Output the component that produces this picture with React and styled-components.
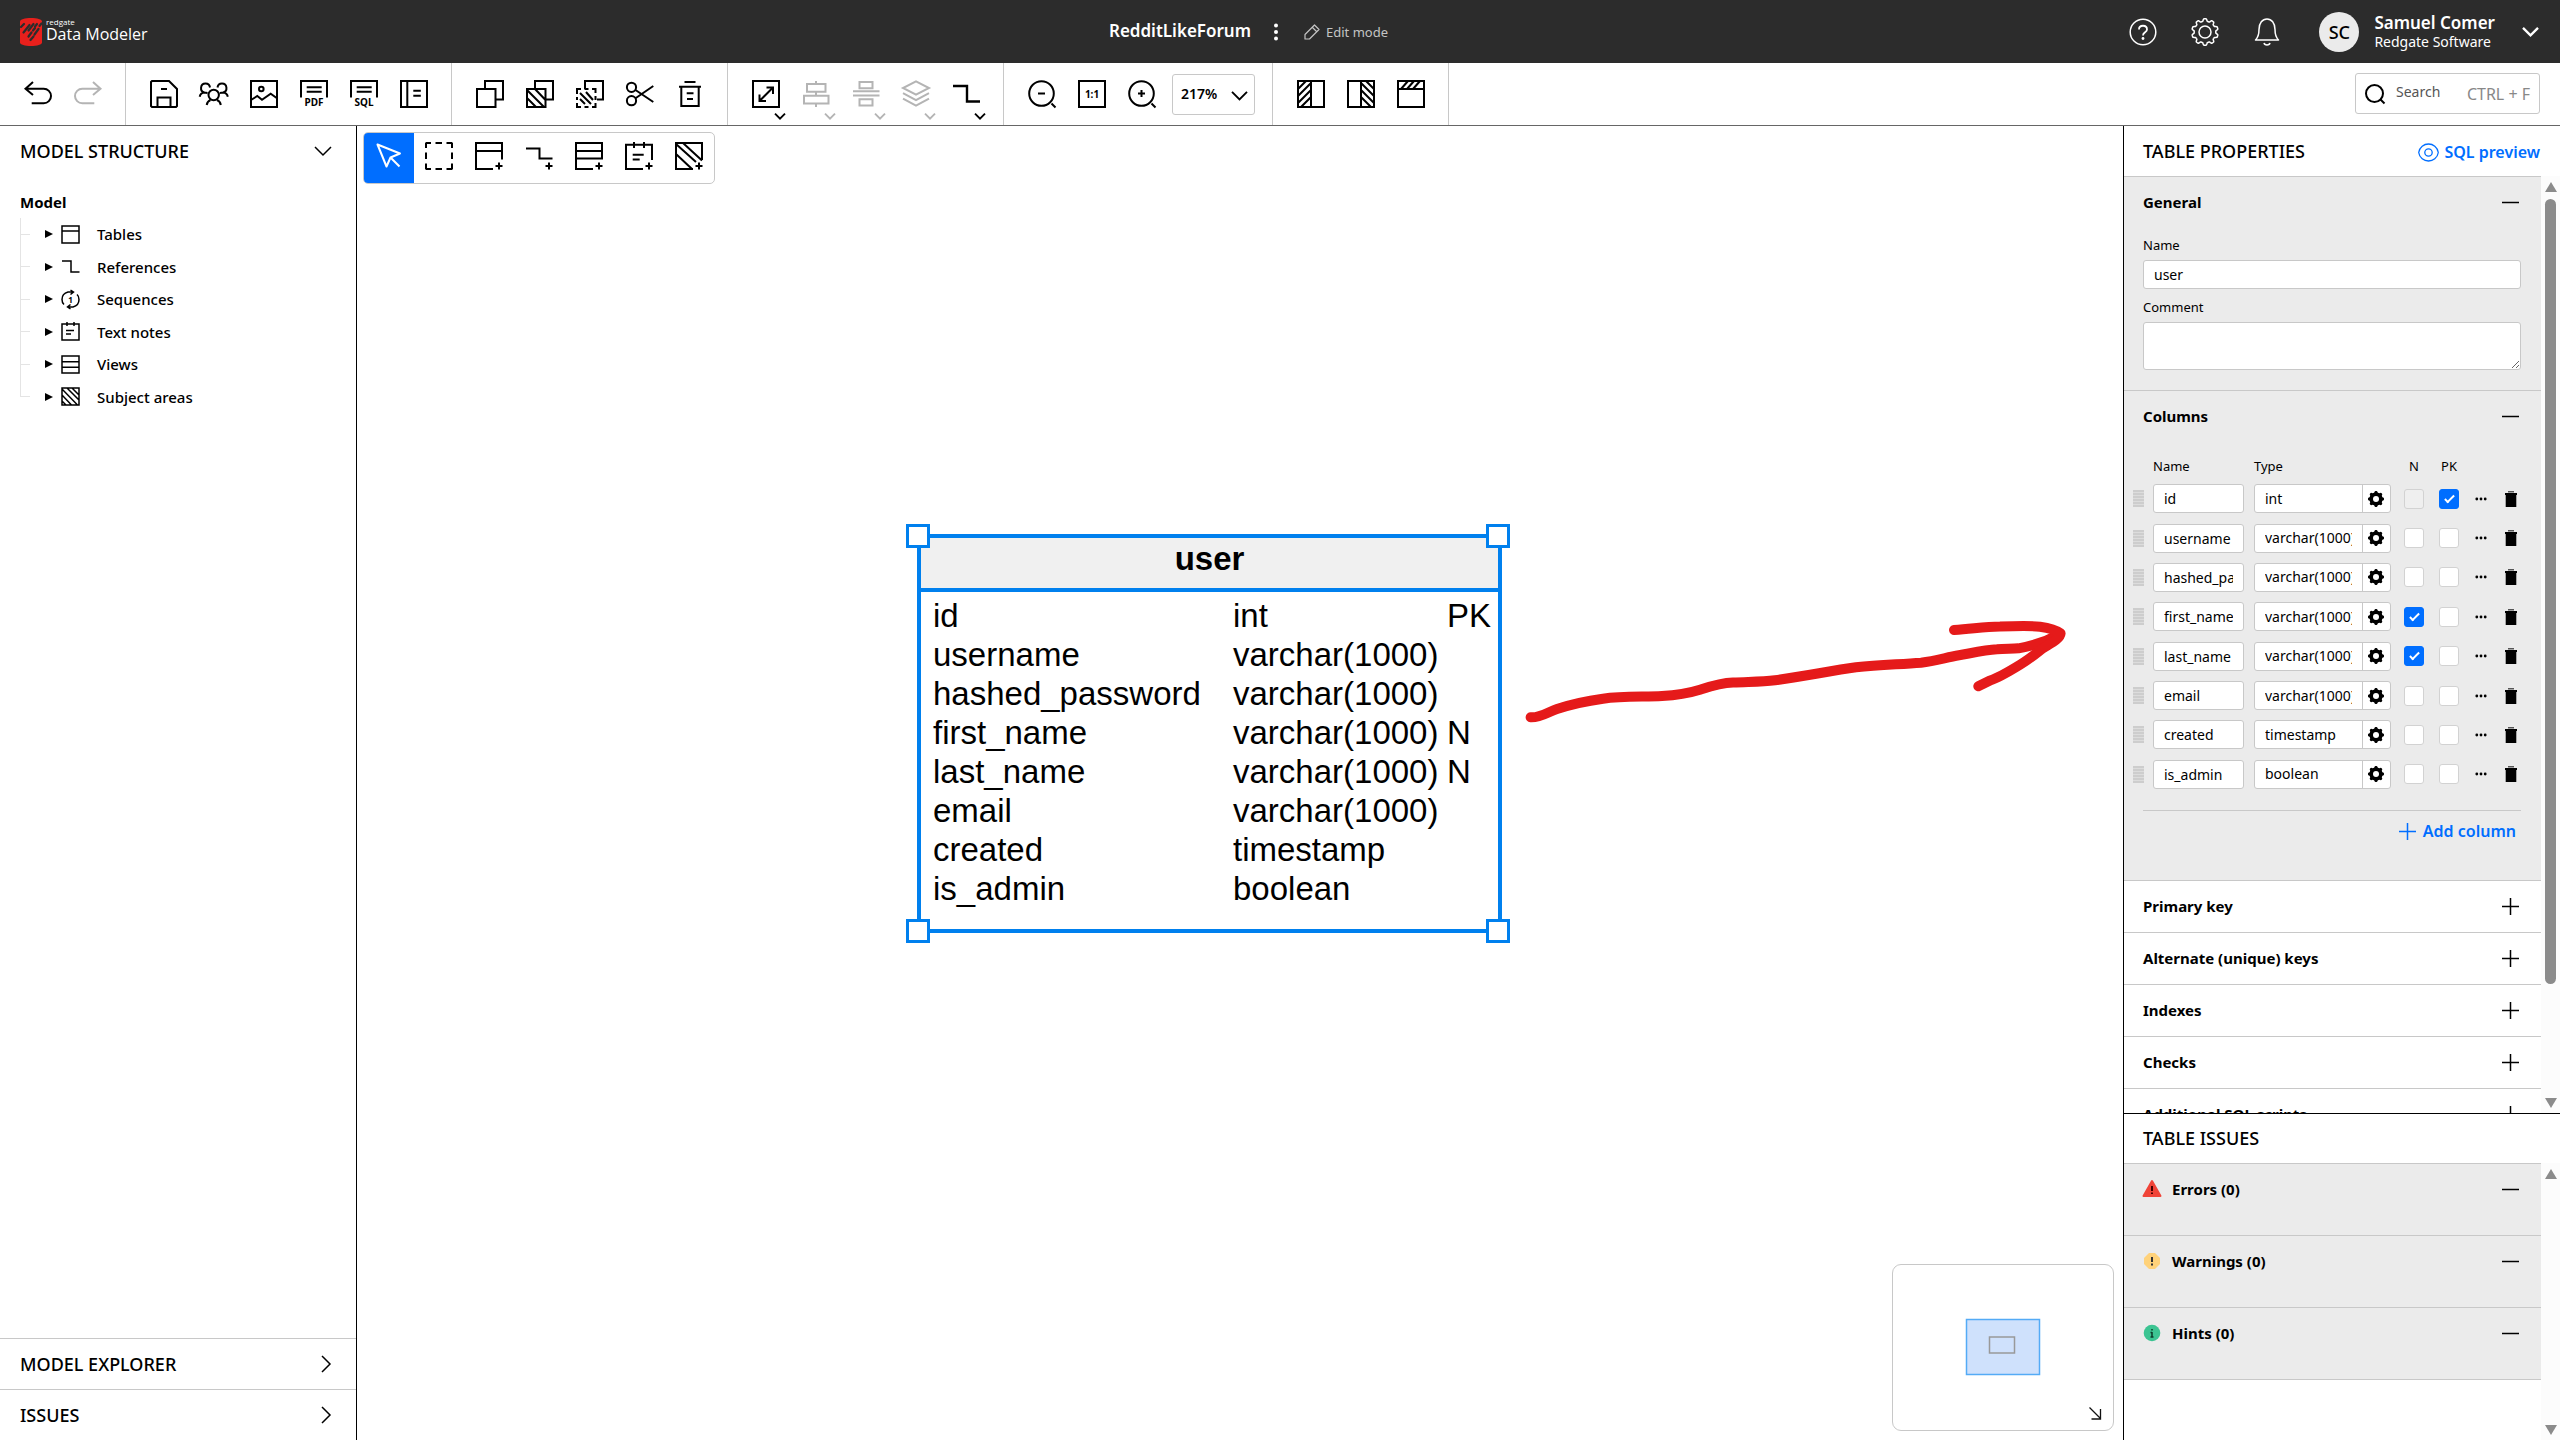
import React from "react";
import styled, { createGlobalStyle, css } from "styled-components";

const GlobalStyle = createGlobalStyle`
  *, *::before, *::after { box-sizing: border-box; }
  html, body, #root { height: 100%; margin: 0; }
  body { background: #fff; color: #000; font: 400 14px/20px "Noto Sans", "Open Sans", sans-serif; overflow: hidden; }
  button, input, select, textarea { font: inherit; color: inherit; margin: 0; }
  button { border: 0; padding: 0; background: none; cursor: pointer; }
  h1, h2, h3, p, ul { margin: 0; padding: 0; }
`;

const blue = "#006eff";
const line = "#c8c8c8";
const panelGray = "#ebebeb";

/* ---------- icons ---------- */

const Svg = styled.svg`
  display: block;
  flex: none;
  fill: none;
  stroke: currentColor;
  overflow: visible;
`;

const Glyph = styled.text`
  fill: currentColor;
  stroke: none;
  font: 700 ${(p) => p.$size}px "Noto Sans", sans-serif;
  text-anchor: middle;
`;

function Icon({ size = 28, box = 28, weight = 2, children }) {
  return (
    <Svg width={size} height={size} viewBox={`0 0 ${box} ${box}`} strokeWidth={weight} aria-hidden="true">
      {children}
    </Svg>
  );
}

function cogPath(c, outer, inner, teeth) {
  const pts = [];
  const steps = teeth * 12;
  for (let i = 0; i <= steps; i++) {
    const a = (i / steps) * Math.PI * 2;
    const w = Math.max(-1, Math.min(1, Math.cos(a * teeth) * 1.8));
    const r = (outer + inner) / 2 + ((outer - inner) / 2) * w;
    pts.push(`${(c + r * Math.sin(a)).toFixed(2)} ${(c - r * Math.cos(a)).toFixed(2)}`);
  }
  return `M${pts.join("L")}Z`;
}

const plusMark = "M24 20.5v7M20.5 24h7";

const icons = {
  undo: <path d="M9 2 1.5 8.7 9 15M1.5 8.7h18.2a7.3 7.3 0 0 1 0 14.6H7.7" />,
  redo: <path d="M19 2l7.5 6.7L19 15M26.500 8.700H8.300a7.300 7.300 0 0 0 0 14.600h12" />,
  save: <path d="M2 1h17l8 8v17l-1 1H2l-1-1V2zM11 9h6M7.500 27v-9.500h13V27" />,
  people: (
    <>
      <circle cx="13.700" cy="15" r="5.200" />
      <path d="M6.700 25c.4-2.500 1.800-4.200 3.800-5M20.800 25c-.4-2.500-1.800-4.200-3.800-5M4.500 12.500a4.500 4.500 0 1 1 5.500-5M-.3 16.800c.4-2.200 2-4 4.800-4.300l3 .5M23 12.500a4.500 4.500 0 1 0-5.500-5M27.800 16.800c-.4-2.200-2-4-4.800-4.300l-3 .5" />
    </>
  ),
  image: (
    <>
      <path d="M1 1h26v26H1zM1 20l6.300-4 4.700 3.700 8.700-6 6.300 4.600" />
      <circle cx="11.300" cy="9" r="2.300" />
    </>
  ),
  pdf: (
    <>
      <path d="M1 17.500V1h26v16.500M6.700 7.300h15M6.700 11.800h15" />
      <Glyph x="14" y="26" $size={10}>PDF</Glyph>
    </>
  ),
  sql: (
    <>
      <path d="M1 17.500V1h26v16.500M6.700 7.300h15M6.700 11.800h15" />
      <Glyph x="14" y="26" $size={10}>SQL</Glyph>
    </>
  ),
  docs: <path d="M1 1h26v26H1zM7.300 1v26M13.300 10.700h7.500M13.300 15.700h7.500" />,
  copy: <path d="M1 9h18.500v18H1zM9 9V1h18v18.500h-7.500" />,
  copyArea: <path d="M1 9h18.500v18H1zM9 9V1h18v18.500h-7.500M1 10l17 17M1 18l9 9M9 9l10.500 11" />,
  copyAreaDashed: (
    <>
      <path d="M9 9V1h18v18.500h-6" />
      <path d="M1 14V9h4M8.500 9h4M16 9h3.500v4M19.500 16v4M19.500 23v4H16M12.500 27h-4M5 27H1v-4M1 20v-3M4 13l11 11M4 19l5 5M10 12l7 8" />
    </>
  ),
  cut: (
    <>
      <circle cx="5.500" cy="7.300" r="4.600" />
      <circle cx="5.500" cy="20.700" r="4.600" />
      <path d="M9.500 10 27.300 22M9.500 18.200 27.300 6" />
    </>
  ),
  trash: <path d="M8.500 2h11M3 6.800h22M5.300 7v19h17.400V7M10.700 13.300h6.800M11 19h6" />,
  fit: <path d="M1 1h26v26H1zM8 20.500 20.500 8M14.500 7.500H21V14M7.500 14.500V21H14" />,
  alignV: <path d="M14 1v3M14 12v3.500M14 24v3M5 4h18.500v7.800H5zM2 15.700h24.500v7.800H2z" />,
  alignH: <path d="M7.500 2h13v6.300h-13zM1 11.300h26.500M1 15.500h26.500M7.500 19.300h13v6.300h-13z" />,
  layers: <path d="M14 1.300 27 8l-13 6.700L1 8zM1 13.200l13 7 13-7M1 18.700l13 7 13-7" />,
  reference: <path d="M1 6h14v15.500h13" strokeWidth="2.400" />,
  zoomOut: (
    <>
      <circle cx="13.500" cy="13.500" r="12.300" />
      <path d="M10 13.500h7M23.500 23.500l4 4" />
    </>
  ),
  zoomReset: (
    <>
      <path d="M1 1h26v26H1z" />
      <Glyph x="14" y="18" $size={10}>1:1</Glyph>
    </>
  ),
  zoomIn: (
    <>
      <circle cx="13.500" cy="13.500" r="12.300" />
      <path d="M10 13.500h7M13.500 10v7M23.500 23.500l4 4" />
    </>
  ),
  panelLeft: <path d="M1 1h26v26H1zM14 1v26M1 9l8-8M1 16 14 3M1 23 14 10M4 27l10-10" />,
  panelRight: <path d="M1 1h26v26H1zM14 1v26M19 1l8 8M14 3l13 13M14 10l13 13M14 17l10 10" />,
  panelTop: <path d="M1 1h26v26H1zM1 9h26M4 9l7-8M10 9l7-8M16 9l7-8" />,
  cursor: <path d="M2.500 2.500 25 11.500 15.500 15.500 11.500 24.500zM15.500 15.500l9 9" strokeLinejoin="round" />,
  marquee: (
    <path d="M1 6V1.500L1.500 1H6M10.500 1h6.500M21.500 1h5l.5.500V6M27 10.500V17M27 21.500v5l-.5.500h-5M17 27h-6.500M6 27H1.500L1 26.500v-5M1 17v-6.500" />
  ),
  tableAdd: <path d={`M27 17.500V1H1v26h17M1 9h26${plusMark}`} />,
  referenceAdd: <path d={`M1 6.500h13.500v10h13${plusMark}`} />,
  viewAdd: <path d={`M27 17.500V1H1v26h17M1 9h26M1 16.500h26${plusMark}`} />,
  noteAdd: <path d={`M27 18V2.700H1V27h17M9 0v6M19 0v6M7.700 12.700h11M7.700 17.500h7${plusMark}`} />,
  areaAdd: <path d={`M27 18V1H1v26h17M8 1l19 17.500M1 2l20 18M1 12l16 15${plusMark}`} />,
};

const treeIcons = {
  Tables: <path d="M1 1h17v17H1zM1 6h17" />,
  References: <path d="M1 4h9v11h8.500" />,
  Sequences: (
    <>
      <path d="M12 2H7C3 3 1 6 1 9.500c0 2 .8 4 2 5M9.500 0l3 2-3 2.500M7 17h5c4-1 6-4 6-7.500 0-2-.8-4-2-5M9.500 19l-3-2 3-2.500" />
      <Glyph x="9.500" y="12.500" $size={8}>1</Glyph>
    </>
  ),
  "Text notes": <path d="M1 2h17v16H1zM6 0v4M13 0v4M5 8.500h8M5 12h5" />,
  Views: <path d="M1 1h17v17H1zM1 6.700h17M1 12.300h17" />,
  "Subject areas": <path d="M1 1h17v17H1zM1 2l15.500 16M1 8l9.500 10M6 1l12 12M1 14l4 4M11 1l7 7" />,
};

const Chevron = ({ width = 16, dir = "down", weight = 2 }) => {
  const d = dir === "down" ? "M0 1l8 8 8-8" : "M1 0l8 8-8 8";
  const [w, h] = dir === "down" ? [16, 10] : [10, 16];
  return (
    <Svg width={width} height={(width * h) / w} viewBox={`0 0 ${w} ${h}`} strokeWidth={weight} aria-hidden="true">
      <path d={d} />
    </Svg>
  );
};

/* ---------- header ---------- */

const Shell = styled.div`
  display: flex;
  flex-direction: column;
  height: 100vh;
`;

const Header = styled.header`
  display: grid;
  grid-template-columns: 1fr auto 1fr;
  align-items: center;
  height: 63px;
  flex: none;
  padding: 0 20px;
  background: #2c2c2c;
  color: #fff;
`;

const Brand = styled.a`
  display: flex;
  align-items: center;
  gap: 4px;
  color: #fff;
  text-decoration: none;
`;

const BrandText = styled.span`
  display: flex;
  flex-direction: column;
  padding-bottom: 4px;
  font-family: "Open Sans", sans-serif;
  font-size: 16px;
  line-height: 16px;
`;

const BrandSmall = styled.span`
  font-size: 8px;
  line-height: 8px;
`;

const DocTitle = styled.div`
  display: flex;
  align-items: center;
  padding-right: 63px;
`;

const DocName = styled.h1`
  padding-bottom: 2px;
  font-size: 17px;
  line-height: 24px;
  font-weight: 600;
`;

const HeaderButton = styled.button`
  display: grid;
  place-items: center;
  width: ${(p) => p.$width || 28}px;
  height: 40px;
`;

const Mode = styled.button`
  display: flex;
  align-items: center;
  gap: 6px;
  margin-left: 3px;
  color: #c4c4c4;
  font-size: 13px;
`;

const Account = styled.div`
  display: flex;
  align-items: center;
  justify-content: flex-end;
`;

const HeaderTools = styled.div`
  display: flex;
  gap: 34px;
  margin-right: 38px;
`;

const Avatar = styled.span`
  display: grid;
  place-items: center;
  width: 40px;
  height: 40px;
  margin-right: 15px;
  border-radius: 50%;
  background: #ebebeb;
  color: #000;
  font-size: 18px;
  font-weight: 500;
`;

const Who = styled.div`
  display: flex;
  flex-direction: column;
  margin-right: 25px;
  font-size: 14px;
  line-height: 18px;
`;

const WhoName = styled.span`
  font-size: 17px;
  line-height: 20px;
  font-weight: 600;
`;

/* ---------- toolbar ---------- */

const Toolbar = styled.div`
  display: flex;
  height: 63px;
  flex: none;
  border-bottom: 1px solid #666;
`;

const ToolGroup = styled.div`
  display: flex;
  align-items: center;
  padding: 0 ${(p) => p.$end || 12}px 0 13px;
  border-right: 1px solid ${line};
`;

const ToolButton = styled.button`
  position: relative;
  display: grid;
  place-items: center;
  width: 50px;
  height: 50px;
  &:disabled { color: #b4b4b4; cursor: default; }
`;

const MenuMark = styled.span`
  position: absolute;
  left: 34px;
  bottom: 0;
`;

const ZoomLabel = styled.label`
  position: relative;
  display: flex;
  margin-left: 5px;
`;

const ZoomSelect = styled.select`
  appearance: none;
  width: 83px;
  height: 41px;
  padding: 0 8px;
  border: 1px solid ${line};
  border-radius: 3px;
  background: #fff;
  font-size: 14px;
  font-weight: 600;
`;

const ZoomMark = styled.span`
  position: absolute;
  right: 8px;
  top: 17px;
  pointer-events: none;
`;

const Search = styled.label`
  display: flex;
  align-items: center;
  width: 185px;
  height: 41px;
  margin: 10px 20px 0 auto;
  padding: 0 9px;
  border: 1px solid ${line};
  border-radius: 3px;
  color: #000;
`;

const SearchInput = styled.input`
  flex: 1;
  min-width: 0;
  width: 0;
  padding: 0 0 4px;
  margin-left: 11px;
  border: 0;
  outline: 0;
  background: none;
  &::placeholder { color: #555; opacity: 1; }
`;

const Shortcut = styled.kbd`
  font: 400 16px/20px "Noto Sans", sans-serif;
  color: #888;
`;

/* ---------- body ---------- */

const Body = styled.div`
  display: flex;
  flex: 1;
  min-height: 0;
`;

const LeftPanel = styled.aside`
  display: flex;
  flex-direction: column;
  width: 357px;
  flex: none;
  border-right: 1px solid #000;
`;

const PanelToggle = styled.button`
  display: flex;
  align-items: center;
  justify-content: space-between;
  height: ${(p) => (p.$ruled ? 51 : 49)}px;
  padding: 0 25px 0 20px;
  border-top: ${(p) => (p.$ruled ? `1px solid ${line}` : "0")};
  font-size: 18px;
  font-weight: 500;
  text-align: left;
`;

const Tree = styled.div`
  flex: 1;
  padding: 17px 20px 0;
`;

const TreeRoot = styled.h3`
  font-size: 15px;
  line-height: 20px;
  font-weight: 700;
`;

const TreeList = styled.ul`
  display: grid;
  grid-auto-rows: 1fr;
  height: 195px;
  margin-top: 6px;
  list-style: none;
`;

const TreeItem = styled.li`
  display: flex;
  align-items: center;
  background:
    linear-gradient(#e4e4e4, #e4e4e4) 0 0 / 1px ${(p) => (p.$last ? "50%" : "100%")} no-repeat,
    linear-gradient(#e4e4e4, #e4e4e4) 0 50% / 10px 1px no-repeat;
  padding-left: 25px;
`;

const TreeButton = styled.button`
  display: flex;
  align-items: center;
  font-size: 15px;
  font-weight: 500;
`;

const Caret = styled.span`
  border: solid transparent;
  border-width: 4px 0 4px 8px;
  border-left-color: #000;
  margin-right: 8px;
`;

const TreeText = styled.span`
  margin-left: 17px;
`;

/* ---------- canvas ---------- */

const Canvas = styled.main`
  position: relative;
  flex: 1;
  min-width: 0;
  overflow: hidden;
`;

const Palette = styled.div`
  position: absolute;
  left: 6px;
  top: 6px;
  display: flex;
  border: 1px solid ${line};
  border-radius: 5px;
  overflow: hidden;
  background: #fff;
`;

const PaletteButton = styled.button`
  display: grid;
  place-items: center;
  width: 50px;
  height: 50px;
  padding-bottom: 4px;
  ${(p) => p.$active && css`background: ${blue}; color: #fff;`}
`;

const Entity = styled.section`
  position: absolute;
  left: 560px;
  top: 408px;
  width: 585px;
  height: 399px;
  border: 4px solid #0080ee;
  background: #fff;
  font-family: "Liberation Sans", Arial, sans-serif;
  font-size: 33px;
`;

const EntityTitle = styled.h2`
  height: 54px;
  border-bottom: 4px solid #0080ee;
  background: #f0f0f0;
  font-size: 33px;
  line-height: 42px;
  font-weight: 700;
  text-align: center;
`;

const EntityTable = styled.table`
  table-layout: fixed;
  width: 100%;
  margin-top: 4px;
  border-collapse: collapse;
  td { height: 39px; padding: 0; line-height: 39px; white-space: nowrap; }
  td:first-child { width: 312px; padding-left: 12px; }
  td:nth-child(2) { width: 214px; }
`;

const Handle = styled.span`
  position: absolute;
  width: 24px;
  height: 24px;
  border: 3px solid #0080ee;
  background: #fff;
  ${(p) => (p.$right ? "right: -12px;" : "left: -15px;")}
  ${(p) => (p.$bottom ? "bottom: -14px;" : "top: -14px;")}
`;

const Annotation = styled.svg`
  position: absolute;
  left: 1163px;
  top: 484px;
  pointer-events: none;
`;

const Minimap = styled.div`
  position: absolute;
  right: 9px;
  bottom: 9px;
  width: 222px;
  height: 167px;
  border: 1px solid ${line};
  border-radius: 9px;
  background: #fff;
`;

/* ---------- right panel ---------- */

const RightPanel = styled.aside`
  display: flex;
  flex-direction: column;
  width: 437px;
  flex: none;
  border-left: 1px solid #000;
`;

const PanelHead = styled.div`
  display: flex;
  align-items: center;
  justify-content: space-between;
  flex: none;
  height: ${(p) => p.$height}px;
  padding: 0 20px 0 19px;
`;

const PanelTitle = styled.h2`
  padding-bottom: 1px;
  font-size: 18px;
  line-height: 24px;
  font-weight: 500;
`;

const Preview = styled.a`
  display: flex;
  align-items: center;
  gap: 5px;
  padding-top: 2px;
  color: ${blue};
  font-size: 16px;
  font-weight: 600;
  text-decoration: none;
`;

const Scroller = styled.div`
  display: flex;
  flex: 1;
  min-height: 0;
`;

const ScrollContent = styled.div`
  flex: 1;
  min-width: 0;
  overflow: hidden;
`;

const ScrollBar = styled.div`
  display: flex;
  flex-direction: column;
  align-items: center;
  width: 19px;
  padding: 6px 0 5px;
  background: #fcfcfc;
`;

const ScrollArrow = styled.span`
  border: solid transparent;
  border-width: ${(p) => (p.$down ? "10px 6px 0" : "0 6px 10px")};
  border-${(p) => (p.$down ? "top" : "bottom")}-color: #8b8b8b;
`;

const ScrollTrack = styled.div`
  flex: 1;
  width: 11px;
  margin: 7px 0;
`;

const ScrollThumb = styled.div`
  height: 88%;
  border-radius: 6px;
  background: #8b8b8b;
`;

const Section = styled.section`
  border-top: 1px solid ${line};
  background: ${(p) => (p.$open ? panelGray : "#fff")};
  padding-bottom: ${(p) => p.$pad || 0}px;
`;

const SectionHead = styled.button`
  display: flex;
  align-items: center;
  width: 100%;
  height: 50px;
  padding: 0 22px 0 19px;
  font-size: 15px;
  font-weight: 700;
  text-align: left;
`;

const SectionName = styled.span`
  flex: 1;
`;

const Field = styled.label`
  display: flex;
  flex-direction: column;
  margin: 0 20px 0 19px;
  padding-top: 9px;
`;

const FieldText = styled.span`
  height: 24px;
  font-size: 13px;
  line-height: 19px;
`;

const controlBox = css`
  border: 1px solid ${line};
  border-radius: 3px;
  background: #fff;
  outline: 0;
`;

const TextInput = styled.input`
  ${controlBox}
  width: 100%;
  height: 29px;
  padding: 0 10px;
  font-size: 14px;
`;

const TextBox = styled.textarea`
  ${controlBox}
  height: 48px;
  resize: vertical;
`;

const ColumnsTable = styled.table`
  table-layout: fixed;
  width: 402px;
  height: 342px;
  margin-top: 11px;
  border-collapse: collapse;
  th { height: 27px; padding: 0; font-size: 13px; font-weight: 400; text-align: left; }
  td { padding: 0; }
`;

const Col = styled.col`
  width: ${(p) => p.$w}px;
`;

const HeadCell = styled.div`
  width: ${(p) => (p.$tick ? "20px" : "auto")};
  text-align: ${(p) => (p.$tick ? "center" : "left")};
`;

const Grip = styled.div`
  width: 11px;
  height: 17px;
  margin-left: 9px;
  background: repeating-linear-gradient(#cdcdcd 0 2px, #dcdcdc 2px 3px);
`;

const NameInput = styled(TextInput)`
  display: block;
  width: 91px;
`;

const TypeBox = styled.div`
  ${controlBox}
  display: flex;
  width: 137px;
  height: 29px;
`;

const TypeInput = styled.input`
  width: 108px;
  padding: 0 10px;
  border: 0;
  border-right: 1px solid ${line};
  outline: 0;
  background: none;
`;

const SmallButton = styled.button`
  display: grid;
  place-items: center;
  width: 26px;
  height: 27px;
`;

const Tick = styled.input`
  appearance: none;
  display: block;
  position: relative;
  width: 20px;
  height: 20px;
  border: 1px solid #d2d2d2;
  border-radius: 3px;
  background: #fff;
  &:disabled { background: #efefef; }
  &:checked { background: ${blue}; border-color: ${blue}; }
  &:checked::after {
    content: "";
    position: absolute;
    left: 7px;
    top: 3px;
    width: 5px;
    height: 10px;
    border: solid #fff;
    border-width: 0 2px 2px 0;
    transform: rotate(45deg);
  }
`;

const AddRow = styled.div`
  display: flex;
  justify-content: flex-end;
  margin: 16px 20px 0 19px;
  padding: 9px 5px 0 0;
  border-top: 1px solid ${line};
`;

const AddButton = styled.button`
  display: flex;
  align-items: center;
  gap: 7px;
  color: ${blue};
  font-size: 16px;
  font-weight: 600;
  line-height: 22px;
`;

const IssueArea = styled.div`
  display: flex;
  flex-direction: column;
  height: 327px;
  flex: none;
  border-top: 1px solid #000;
`;

const IssueHead = styled(SectionHead)`
  gap: 11px;
`;

const IssueEnd = styled.div`
  border-top: 1px solid ${line};
`;

/* ---------- data ---------- */

const toolGroups = [
  [["Undo", "undo"], ["Redo", "redo", { off: true }]],
  [["Save", "save"], ["Share", "people"], ["Export image", "image"], ["Export PDF", "pdf"], ["Generate SQL", "sql"], ["Documentation", "docs"]],
  [["Copy", "copy"], ["Copy subject area", "copyArea"], ["Copy area only", "copyAreaDashed"], ["Cut", "cut"], ["Delete", "trash"]],
  [
    ["Fit", "fit", { menu: true }],
    ["Align", "alignV", { menu: true, off: true }],
    ["Distribute", "alignH", { menu: true, off: true }],
    ["Layers", "layers", { menu: true, off: true }],
    ["Line style", "reference", { menu: true }],
  ],
];
const zoomTools = [["Zoom out", "zoomOut"], ["Actual size", "zoomReset"], ["Zoom in", "zoomIn"]];
const panelTools = [["Left panel", "panelLeft"], ["Right panel", "panelRight"], ["Top panel", "panelTop"]];
const paletteTools = [
  ["Select", "cursor"], ["Area select", "marquee"], ["Add table", "tableAdd"], ["Add reference", "referenceAdd"],
  ["Add view", "viewAdd"], ["Add text note", "noteAdd"], ["Add subject area", "areaAdd"],
];

const columns = [
  { name: "id", type: "int", pk: true },
  { name: "username", type: "varchar(1000)" },
  { name: "hashed_password", type: "varchar(1000)" },
  { name: "first_name", type: "varchar(1000)", nullable: true },
  { name: "last_name", type: "varchar(1000)", nullable: true },
  { name: "email", type: "varchar(1000)" },
  { name: "created", type: "timestamp" },
  { name: "is_admin", type: "boolean" },
];

const closedSections = ["Primary key", "Alternate (unique) keys", "Indexes", "Checks", "Additional SQL scripts"];

const issueKinds = [
  { name: "Errors (0)", icon: <><path d="M9 1 17.500 16H.5z" fill="#f04438" stroke="#f04438" strokeLinejoin="round" /><path d="M9 6v5M9 12.500v1.500" stroke="#400" /></> },
  { name: "Warnings (0)", icon: <><path d="M6 1h6l5 5v6l-5 5H6l-5-5V6z" fill="#ffd27a" stroke="none" /><path d="M9 5v5M9 11.500v2" stroke="#333" /></> },
  { name: "Hints (0)", icon: <><circle cx="9" cy="9" r="8.300" fill="#3cc492" stroke="none" /><path d="M9 8v5M9 5v1.500M7.500 8.500H9M7.500 13h3" stroke="#0c3a2a" strokeWidth="1.500" /></> },
];

/* ---------- parts ---------- */

function Tool({ item }) {
  const [label, icon, opt = {}] = item;
  return (
    <ToolButton type="button" aria-label={label} disabled={opt.off}>
      <Icon>{icons[icon]}</Icon>
      {opt.menu && <MenuMark><Chevron width={10} weight={3} /></MenuMark>}
    </ToolButton>
  );
}

const Plus = ({ size = 17 }) => (
  <Icon size={size} box={17} weight={1.5}><path d="M8.500 0v17M0 8.500h17" /></Icon>
);
const Minus = () => (
  <Icon size={17} box={17} weight={1.500}><path d="M0 8.500h17" /></Icon>
);

function TopBar() {
  return (
    <Header>
      <Brand href="#home">
        <Svg width="22" height="28" viewBox="0 0 22 28" aria-hidden="true">
          <path d="M0 3.500C0 1.500 5 0 11 0s11 1.500 11 3.500v21c0 2-5 3.500-11 3.500S0 26.500 0 24.500z" fill="#e8201c" stroke="none" />
          <path d="M1 9l3-3M3.500 14.500l6-7.500M8.500 12.500l5-6.500M15 8.500l2-2.500M8.500 18.500l3-4M13 12.500l2-2.500M19.500 8l2-2.500M10.500 22l3-3.500M14.500 16.500l4-5.500" stroke="#2c2c2c" strokeWidth="2.200" strokeLinecap="round" />
        </Svg>
        <BrandText>
          <BrandSmall>redgate</BrandSmall>
          Data Modeler
        </BrandText>
      </Brand>
      <DocTitle>
        <DocName>RedditLikeForum</DocName>
        <HeaderButton type="button" aria-label="Document menu" $width={50}>
          <Icon size={18} box={18}>
            <g fill="#fff" stroke="none"><circle cx="9" cy="2.500" r="2" /><circle cx="9" cy="9" r="2" /><circle cx="9" cy="15.500" r="2" /></g>
          </Icon>
        </HeaderButton>
        <Mode type="button">
          <Icon size={16} box={16} weight={1.200}><path d="M1 15v-4.500L10.500 1l4.500 4.500L5.500 15zM8.500 3.500 12.500 7.500" strokeLinejoin="round" /></Icon>
          Edit mode
        </Mode>
      </DocTitle>
      <Account>
        <HeaderTools>
          <HeaderButton type="button" aria-label="Help">
            <Icon weight={1.500}>
              <circle cx="14" cy="14" r="12.800" />
              <path d="M10 11.500c0-5 8-5 8 0 0 3-4 2.700-4 6" strokeWidth="1.800" />
              <circle cx="14" cy="20.500" r="1.400" fill="#fff" stroke="none" />
            </Icon>
          </HeaderButton>
          <HeaderButton type="button" aria-label="Settings">
            <Icon weight={1.500}>
              <path d={cogPath(14, 13.2, 10.8, 10)} strokeLinejoin="round" />
              <circle cx="14" cy="14" r="6" />
            </Icon>
          </HeaderButton>
          <HeaderButton type="button" aria-label="Notifications">
            <Icon weight={1.500}>
              <path d="M2.500 22h23c-3-3-3.500-6-3.500-10.500C22 5 18.500 1 14 1S6 5 6 11.500C6 16 5.500 19 2.500 22zM11 25c.5 2.500 5.500 2.500 6 0" strokeLinejoin="round" />
            </Icon>
          </HeaderButton>
        </HeaderTools>
        <Avatar>SC</Avatar>
        <Who>
          <WhoName>Samuel Comer</WhoName>
          <span>Redgate Software</span>
        </Who>
        <HeaderButton type="button" aria-label="Account menu" $width={20}>
          <Chevron width={15} weight={2.500} />
        </HeaderButton>
      </Account>
    </Header>
  );
}

function Tools() {
  return (
    <Toolbar>
      {toolGroups.map((group, i) => (
        <ToolGroup key={i}>{group.map((t) => <Tool key={t[0]} item={t} />)}</ToolGroup>
      ))}
      <ToolGroup $end={17}>
        {zoomTools.map((t) => <Tool key={t[0]} item={t} />)}
        <ZoomLabel>
          <ZoomSelect aria-label="Zoom level" defaultValue="217%"><option>217%</option></ZoomSelect>
          <ZoomMark><Chevron width={15} weight={2} /></ZoomMark>
        </ZoomLabel>
      </ToolGroup>
      <ToolGroup>{panelTools.map((t) => <Tool key={t[0]} item={t} />)}</ToolGroup>
      <Search>
        <Icon size={20} box={20}><circle cx="9.500" cy="9.500" r="8.500" /><path d="M15.500 15.500l4 4" /></Icon>
        <SearchInput type="text" placeholder="Search" aria-label="Search" />
        <Shortcut>CTRL + F</Shortcut>
      </Search>
    </Toolbar>
  );
}

function Structure() {
  const names = Object.keys(treeIcons);
  return (
    <LeftPanel>
      <PanelToggle type="button">MODEL STRUCTURE<Chevron weight={1.500} /></PanelToggle>
      <Tree>
        <TreeRoot>Model</TreeRoot>
        <TreeList>
          {names.map((name, i) => (
            <TreeItem key={name} $last={i === names.length - 1}>
              <TreeButton type="button">
                <Caret />
                <Icon size={19} box={19} weight={1.500}>{treeIcons[name]}</Icon>
                <TreeText>{name}</TreeText>
              </TreeButton>
            </TreeItem>
          ))}
        </TreeList>
      </Tree>
      <PanelToggle type="button" $ruled>MODEL EXPLORER<Chevron dir="right" width={10} weight={1.500} /></PanelToggle>
      <PanelToggle type="button" $ruled>ISSUES<Chevron dir="right" width={10} weight={1.500} /></PanelToggle>
    </LeftPanel>
  );
}

function Diagram() {
  return (
    <Canvas>
      <Palette>
        {paletteTools.map(([label, icon], i) => (
          <PaletteButton key={icon} type="button" aria-label={label} $active={i === 0}>
            <Icon>{icons[icon]}</Icon>
          </PaletteButton>
        ))}
      </Palette>
      <Entity>
        <EntityTitle>user</EntityTitle>
        <EntityTable>
          <tbody>
            {columns.map((c) => (
              <tr key={c.name}>
                <td>{c.name}</td>
                <td>{c.type}</td>
                <td>{c.pk ? "PK" : c.nullable ? "N" : ""}</td>
              </tr>
            ))}
          </tbody>
        </EntityTable>
        <Handle />
        <Handle $right />
        <Handle $bottom />
        <Handle $right $bottom />
      </Entity>
      <Annotation width="560" height="90" viewBox="1520 610 560 90" overflow="visible" aria-hidden="true">
        <g fill="none" stroke="#e51a1a" strokeWidth="10" strokeLinecap="round" strokeLinejoin="round">
          <path d="M1530.600 717.300C1540 718 1548 712 1557 709C1572 704 1586 701 1603 698.700C1622 696 1645 697 1662 696C1676 695.300 1688 693.500 1699 690C1710 686.500 1720 683 1733 682.500C1750 681.700 1762 682 1775 680.300C1803 676.500 1830 671 1856 667.300C1880 664.500 1900 664.500 1921 662.700C1936 661 1946 657.500 1959 655.300C1972 653 1985 650 1997 649.300C2005 648.500 2012 649 2018.500 648.300C2034 645.500 2047 641 2058.700 634.500" />
          <path d="M1954 630C1975 628.500 1985 626.700 2000 626.600C2020 625.800 2032 625.800 2040 626.700C2049 628 2056 630 2060.600 633.300C2060 640 2047 645 2039.600 650.700C2033 656 2028 660 2020.400 664.500C2005 674 1998 678 1990 680.500L1978.300 686.300" />
        </g>
      </Annotation>
      <Minimap>
        <Svg width="220" height="165" viewBox="1893 1265 220 165" aria-hidden="true">
          <rect x="1966.500" y="1319.500" width="73" height="55" fill="#cfe1fc" stroke="#54abf6" strokeWidth="1.500" />
          <rect x="1989.500" y="1337" width="25" height="16" stroke="#999" strokeWidth="1.500" />
          <path d="M2089.500 1407.500l11 11M2100.500 1409v10h-9" stroke="#111" strokeWidth="1.300" />
        </Svg>
      </Minimap>
    </Canvas>
  );
}

function Bar({ thumb }) {
  return (
    <ScrollBar aria-hidden="true">
      <ScrollArrow />
      <ScrollTrack>{thumb && <ScrollThumb />}</ScrollTrack>
      <ScrollArrow $down />
    </ScrollBar>
  );
}

function ColumnRow({ column }) {
  return (
    <tr>
      <td><Grip /></td>
      <td><NameInput aria-label="Column name" defaultValue={column.name} /></td>
      <td>
        <TypeBox>
          <TypeInput aria-label="Column type" defaultValue={column.type} />
          <SmallButton type="button" aria-label="Type settings">
            <Icon size={16} box={16} weight={5}>
              <path d={cogPath(8, 8, 6.6, 8)} fill="currentColor" stroke="none" />
              <circle cx="8" cy="8" r="3" fill="#fff" stroke="none" />
            </Icon>
          </SmallButton>
        </TypeBox>
      </td>
      <td><Tick type="checkbox" aria-label="Nullable" defaultChecked={column.nullable} disabled={column.pk} /></td>
      <td><Tick type="checkbox" aria-label="Primary key" defaultChecked={column.pk} /></td>
      <td>
        <SmallButton type="button" aria-label="More">
          <Icon size={12} box={12}><g fill="currentColor" stroke="none"><circle cx="1.800" cy="6" r="1.400" /><circle cx="6" cy="6" r="1.400" /><circle cx="10.200" cy="6" r="1.400" /></g></Icon>
        </SmallButton>
      </td>
      <td>
        <SmallButton type="button" aria-label="Delete column">
          <Icon size={16} box={16}><path d="M5 0h6v1.500H5z" fill="#555" stroke="none" /><path d="M2 2h12v2h-.7v12H2.700V4H2z" fill="currentColor" stroke="none" /></Icon>
        </SmallButton>
      </td>
    </tr>
  );
}

function Properties() {
  return (
    <RightPanel>
      <PanelHead $height={50}>
        <PanelTitle>TABLE PROPERTIES</PanelTitle>
        <Preview href="#sql">
          <Icon size={21} box={21} weight={1.300}><path d="M.7 10.500C1.500 5 6 2 10.500 2s9 3 9.800 8.500C19.500 16 15 19 10.500 19S1.500 16 .7 10.500z" /><circle cx="10.500" cy="10.500" r="3.700" /></Icon>
          SQL preview
        </Preview>
      </PanelHead>
      <Scroller>
        <ScrollContent>
          <Section $open $pad={20}>
            <SectionHead type="button"><SectionName>General</SectionName><Minus /></SectionHead>
            <Field>
              <FieldText>Name</FieldText>
              <TextInput defaultValue="user" />
            </Field>
            <Field>
              <FieldText>Comment</FieldText>
              <TextBox />
            </Field>
          </Section>
          <Section $open $pad={38}>
            <SectionHead type="button"><SectionName>Columns</SectionName><Minus /></SectionHead>
            <ColumnsTable>
              <colgroup>{[29, 101, 150, 35, 29, 30, 28].map((w, i) => <Col key={i} $w={w} />)}</colgroup>
              <thead>
                <tr>
                  <th />
                  <th><HeadCell>Name</HeadCell></th>
                  <th><HeadCell>Type</HeadCell></th>
                  <th><HeadCell $tick>N</HeadCell></th>
                  <th><HeadCell $tick>PK</HeadCell></th>
                  <th />
                  <th />
                </tr>
              </thead>
              <tbody>{columns.map((c) => <ColumnRow key={c.name} column={c} />)}</tbody>
            </ColumnsTable>
            <AddRow>
              <AddButton type="button"><Plus />Add column</AddButton>
            </AddRow>
          </Section>
          {closedSections.map((name) => (
            <Section key={name} $pad={1}>
              <SectionHead type="button"><SectionName>{name}</SectionName><Plus /></SectionHead>
            </Section>
          ))}
        </ScrollContent>
        <Bar thumb />
      </Scroller>
      <IssueArea>
        <PanelHead $height={49}><PanelTitle>TABLE ISSUES</PanelTitle></PanelHead>
        <Scroller>
          <ScrollContent>
            {issueKinds.map((k) => (
              <Section key={k.name} $open $pad={21}>
                <IssueHead type="button">
                  <Icon size={18} box={18}>{k.icon}</Icon>
                  <SectionName>{k.name}</SectionName>
                  <Minus />
                </IssueHead>
              </Section>
            ))}
            <IssueEnd />
          </ScrollContent>
          <Bar />
        </Scroller>
      </IssueArea>
    </RightPanel>
  );
}

export default function App() {
  return (
    <Shell>
      <GlobalStyle />
      <TopBar />
      <Tools />
      <Body>
        <Structure />
        <Diagram />
        <Properties />
      </Body>
    </Shell>
  );
}
